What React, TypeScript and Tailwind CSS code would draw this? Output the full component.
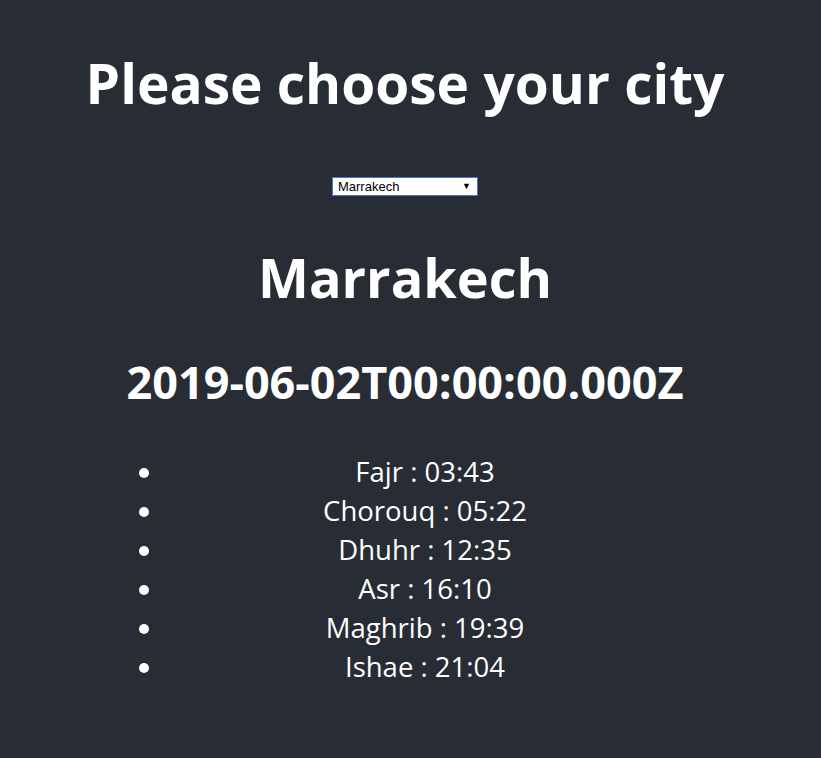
export default function App() {
  const times = [
    ["Fajr", "03:43"],
    ["Chorouq", "05:22"],
    ["Dhuhr", "12:35"],
    ["Asr", "16:10"],
    ["Maghrib", "19:39"],
    ["Ishae", "21:04"],
  ];
  return (
    <div
      className="min-h-screen bg-[#282c34] text-white text-center flex flex-col items-center pr-[11px]"
      style={{ fontFamily: '"Open Sans", "Noto Sans", sans-serif' }}
    >
      <div className="flex flex-col items-center">
        <h1 className="text-[55px] font-bold leading-[66px] mt-[50px]">
          Please choose your city
        </h1>
        <div className="mt-[61px] h-[19px] w-[146px] bg-white border border-[#4d6fcf] flex items-center justify-between pl-[5px] pr-[6px] text-black text-[13px] leading-none" style={{ fontFamily: '"Liberation Sans", Arial, sans-serif' }}>
          <span>Marrakech</span>
          <span className="text-[9px]">▼</span>
        </div>
        <h1 className="text-[54px] font-bold leading-[66px] mt-[48px]">Marrakech</h1>
        <h2 className="text-[45px] font-bold leading-[50px] mt-[47px]">2019-06-02T00:00:00.000Z</h2>
        <ul className="list-disc pl-10 mt-[45px] w-[560px] text-[27.5px] leading-[39px]">
          {times.map(([n, t]) => (
            <li key={n}>
              {n} : {t}
            </li>
          ))}
        </ul>
      </div>
    </div>
  );
}
